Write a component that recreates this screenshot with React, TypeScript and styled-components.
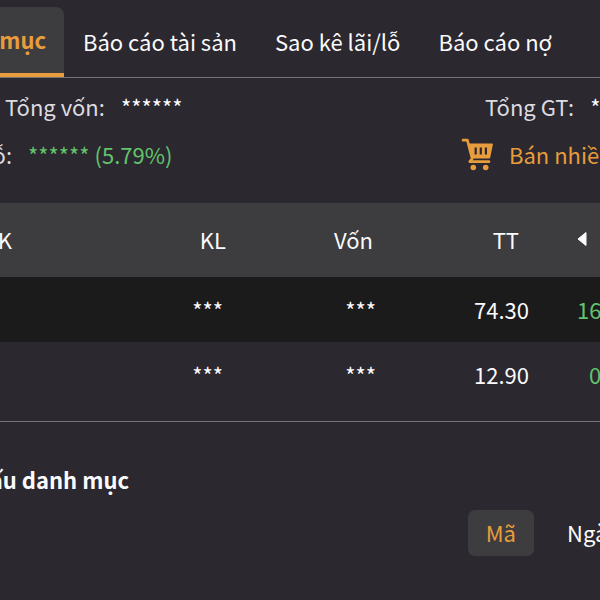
import React from "react";
import styled, { createGlobalStyle } from "styled-components";

const color = {
  page: "#2b282f",
  raised: "#3d3c3f",
  rowDark: "#1b1b1c",
  line: "#77757a",
  text: "#fbfafc",
  soft: "#dddae0",
  accent: "#e89c3c",
  gain: "#62c46c",
};

const GlobalStyle = createGlobalStyle`
  *, *::before, *::after { box-sizing: border-box; }
  html, body { height: 100%; }
  body {
    margin: 0;
    overflow: hidden;
    background: ${color.page};
    color: ${color.text};
    font: 400 22px/32px "Noto Sans CJK SC", "Noto Sans", sans-serif;
  }
  button { font: inherit; color: inherit; background: none; border: 0; padding: 0; cursor: pointer; }
`;

const Page = styled.main`
  width: 100%;
  overflow: hidden;
`;

const TabBar = styled.nav`
  display: flex;
  height: 78px;
  padding-top: 7px;
  border-bottom: 1px solid ${color.line};
  white-space: nowrap;
`;

const Tab = styled.button<{ $active?: boolean }>`
  && {
    display: flex;
    justify-content: flex-end;
    align-items: center;
    flex: none;
    padding: 0 19px 2px;
    ${(p) =>
      p.$active &&
      `
      width: 64px;
      padding: 0 18px 2px 0;
      color: ${color.accent};
      font-weight: 700;
      background: ${color.raised};
      border-bottom: 4px solid ${color.accent};
      border-top-right-radius: 8px;
    `}
  }
`;

const Summary = styled.section`
  padding: 4px 0 25px;
`;

const SummaryRow = styled.div`
  display: flex;
  justify-content: space-between;
  height: 48px;
  align-items: center;
  white-space: nowrap;
`;

const Metric = styled.div<{ $indent?: number; $width?: number }>`
  display: flex;
  flex: none;
  gap: 16px;
  padding-left: ${(p) => p.$indent ?? 0}px;
  width: ${(p) => (p.$width ? `${p.$width}px` : "auto")};
`;

const ClippedLabel = styled.span`
  display: flex;
  justify-content: flex-end;
  flex: none;
  width: 12px;
  color: ${color.soft};
`;

const Label = styled.span`
  color: ${color.soft};
`;

const Gain = styled.span`
  color: ${color.gain};
`;

const SellButton = styled.button`
  && {
    display: flex;
    align-items: center;
    flex: none;
    gap: 15px;
    width: 139px;
    color: ${color.accent};
  }
`;

const CartIcon = styled.svg`
  flex: none;
  width: 33px;
  height: 34px;
`;

const Holdings = styled.table`
  width: 100%;
  table-layout: fixed;
  border-collapse: collapse;
`;

const Col = styled.col<{ $share: number }>`
  width: ${(p) => p.$share}%;
`;

const HeadRow = styled.tr`
  height: 74px;
  background: ${color.raised};
`;

const BodyRow = styled.tr<{ $dark?: boolean }>`
  height: 65px;
  background: ${(p) => (p.$dark ? color.rowDark : color.page)};
`;

const HeadCell = styled.th<{ $end?: number }>`
  padding: 0 ${(p) => p.$end ?? 0}px 2px 0;
  font-weight: 400;
  text-align: right;
`;

const SymbolHeading = styled(ClippedLabel)`
  color: inherit;
`;

const Cell = styled.td<{ $end?: number }>`
  padding: 0 ${(p) => p.$end ?? 5}px 2px 0;
  text-align: right;
`;

const ChangeCell = styled.td<{ $indent: number }>`
  padding: 0 0 2px ${(p) => p.$indent}px;
  color: ${color.gain};
  overflow: hidden;
  white-space: nowrap;
`;

const ScrollButton = styled.button`
  && {
    display: block;
    margin-left: auto;
  }
`;

const Arrow = styled.svg`
  display: block;
  width: 10px;
  height: 16px;
`;

const Structure = styled.section`
  margin-top: 14px;
  border-top: 1px solid ${color.line};
`;

const Title = styled.h2`
  display: flex;
  justify-content: flex-end;
  width: 129px;
  margin: 41px 0 0;
  font-size: 22px;
  line-height: 32px;
  font-weight: 700;
  white-space: nowrap;
`;

const Filters = styled.div`
  display: flex;
  justify-content: flex-end;
  gap: 15px;
  margin-top: 15px;
  white-space: nowrap;
`;

const Filter = styled.button<{ $active?: boolean }>`
  && {
    height: 46px;
    padding: 0 18px 2px;
    border-radius: 7px;
    flex: none;
    ${(p) =>
      p.$active
        ? `background: ${color.raised}; color: ${color.accent};`
        : `width: 51px; text-align: left;`}
  }
`;

function Cart() {
  return (
    <CartIcon viewBox="0 0 33 34" aria-hidden="true">
      <path
        d="M2 3.2h4.4l4.8 18.4-2.4 3.1h19.2"
        fill="none"
        stroke="currentColor"
        strokeWidth="2.7"
        strokeLinecap="round"
        strokeLinejoin="round"
      />
      <path
        fill="currentColor"
        fillRule="evenodd"
        d="M7 6.5h24q1.1 0 .9 1L29.2 20.6q-.2 1-1.2 1H10.5ZM13.6 10.4v7.2h2.2v-7.2ZM18.7 10.4v7.2h2.2v-7.2ZM23.8 10.4v7.2h2.2v-7.2Z"
      />
      <circle cx="12.3" cy="30.5" r="2.8" fill="currentColor" />
      <circle cx="24.7" cy="30.5" r="2.8" fill="currentColor" />
    </CartIcon>
  );
}

const rows = [
  { quantity: "***", cost: "***", price: "74.30", change: "16", indent: 43 },
  { quantity: "***", cost: "***", price: "12.90", change: "0", indent: 55 },
];

export default function App() {
  return (
    <Page>
      <GlobalStyle />
      <TabBar>
        <Tab $active>mục</Tab>
        <Tab>Báo cáo tài sản</Tab>
        <Tab>Sao kê lãi/lỗ</Tab>
        <Tab>Báo cáo nợ</Tab>
      </TabBar>

      <Summary>
        <SummaryRow>
          <Metric $indent={5}>
            <Label>Tổng vốn:</Label>
            <span>******</span>
          </Metric>
          <Metric $width={115}>
            <Label>Tổng GT:</Label>
            <span>*</span>
          </Metric>
        </SummaryRow>
        <SummaryRow>
          <Metric>
            <ClippedLabel>ỗ:</ClippedLabel>
            <Gain>****** (5.79%)</Gain>
          </Metric>
          <SellButton>
            <Cart />
            Bán nhiều
          </SellButton>
        </SummaryRow>
      </Summary>

      <Holdings>
        <colgroup>
          <Col $share={2} />
          <Col $share={36} />
          <Col $share={25} />
          <Col $share={26} />
          <Col $share={11} />
        </colgroup>
        <thead>
          <HeadRow>
            <HeadCell>
              <SymbolHeading>K</SymbolHeading>
            </HeadCell>
            <HeadCell $end={2}>KL</HeadCell>
            <HeadCell $end={5}>Vốn</HeadCell>
            <HeadCell $end={15}>TT</HeadCell>
            <HeadCell $end={13}>
              <ScrollButton aria-label="Cột trước">
                <Arrow viewBox="0 0 10 16" aria-hidden="true">
                  <path d="M9 1.5v13L1 8Z" fill="currentColor" stroke="currentColor" strokeLinejoin="round" />
                </Arrow>
              </ScrollButton>
            </HeadCell>
          </HeadRow>
        </thead>
        <tbody>
          {rows.map((row, i) => (
            <BodyRow key={row.price} $dark={i % 2 === 0}>
              <Cell />
              <Cell>{row.quantity}</Cell>
              <Cell $end={2}>{row.cost}</Cell>
              <Cell>{row.price}</Cell>
              <ChangeCell $indent={row.indent}>{row.change}</ChangeCell>
            </BodyRow>
          ))}
        </tbody>
      </Holdings>

      <Structure>
        <Title>ấu danh mục</Title>
        <Filters>
          <Filter $active>Mã</Filter>
          <Filter>Ngành</Filter>
        </Filters>
      </Structure>
    </Page>
  );
}
